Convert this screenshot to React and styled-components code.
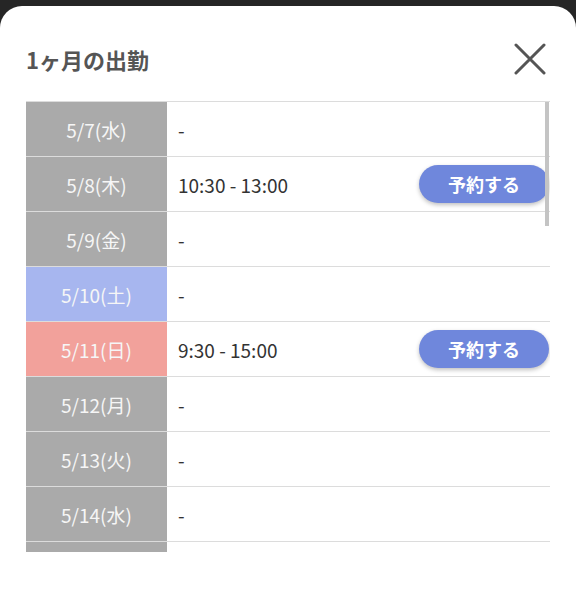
import React from 'react';
import styled, { createGlobalStyle } from 'styled-components';

const days = [
  { date: '5/7(水)', time: '-' },
  { date: '5/8(木)', time: '10:30 - 13:00', reserve: true },
  { date: '5/9(金)', time: '-' },
  { date: '5/10(土)', time: '-', kind: 'sat' },
  { date: '5/11(日)', time: '9:30 - 15:00', reserve: true, kind: 'sun' },
  { date: '5/12(月)', time: '-' },
  { date: '5/13(火)', time: '-' },
  { date: '5/14(水)', time: '-' },
  { date: '5/15(木)', time: '-' },
];

const dateColors = {
  sat: '#a7b6ef',
  sun: '#f2a19b',
  normal: '#aaaaaa',
};

const App = () => {
  return (
    <>
      <GlobalStyle />
      <Screen>
        <Sheet>
          <Header>
            <Title>1ヶ月の出勤</Title>
            <CloseButton aria-label="close">
              <svg width="32" height="32" viewBox="0 0 32 32">
                <path
                  d="M2 2 L30 30 M30 2 L2 30"
                  stroke="#555"
                  strokeWidth="3"
                  strokeLinecap="round"
                />
              </svg>
            </CloseButton>
          </Header>
          <TableWrap>
            {days.map((day) => (
              <Row key={day.date}>
                <DateCell kind={day.kind || 'normal'}>{day.date}</DateCell>
                <TimeCell>
                  <span>{day.time}</span>
                  {day.reserve && <ReserveButton>予約する</ReserveButton>}
                </TimeCell>
              </Row>
            ))}
            <ScrollThumb />
          </TableWrap>
        </Sheet>
      </Screen>
    </>
  );
};

export default App;

const GlobalStyle = createGlobalStyle`
  body {
    margin: 0;
    background: #262626;
    font-family: "Noto Sans CJK JP", "Noto Sans", sans-serif;
  }
`;

const Screen = styled.div`
  height: 590px;
  padding-top: 6px;
  box-sizing: border-box;
  display: flex;
  flex-direction: column;
`;

const Sheet = styled.div`
  flex: 1;
  background: #fff;
  border-radius: 22px 22px 0 0;
  padding: 30px 26px 0;
`;

const Header = styled.div`
  height: 46px;
  display: flex;
  align-items: center;
  justify-content: space-between;
  margin-bottom: 19px;
`;

const Title = styled.h1`
  margin: 0;
  font-size: 22px;
  font-weight: 700;
  color: #555;
`;

const CloseButton = styled.button`
  border: none;
  background: none;
  padding: 0;
  margin-right: 4px;
  display: flex;
`;

const TableWrap = styled.div`
  position: relative;
  height: 451px;
  overflow: hidden;
  border-top: 1px solid #dcdcdc;
  box-sizing: border-box;
`;

const Row = styled.div`
  display: grid;
  grid-template-columns: 141px 1fr;
  height: 55px;
  box-sizing: border-box;
  border-bottom: 1px solid #dcdcdc;
`;

const DateCell = styled.div`
  background: ${(p) => dateColors[p.kind]};
  color: #f6f6f6;
  font-size: 19px;
  display: flex;
  align-items: center;
  justify-content: center;
`;

const TimeCell = styled.div`
  display: flex;
  align-items: center;
  justify-content: space-between;
  padding-left: 11px;
  font-size: 19px;
  color: #333;
`;

const ReserveButton = styled.button`
  width: 130px;
  height: 38px;
  margin-right: 1px;
  border: none;
  border-radius: 19px;
  background: #6f87dc;
  color: #fff;
  font-family: inherit;
  font-size: 18px;
  font-weight: 700;
  box-shadow: 0 2px 4px rgba(0, 0, 0, 0.25);
`;

const ScrollThumb = styled.div`
  position: absolute;
  top: 0;
  right: 1px;
  width: 4px;
  height: 124px;
  background: #c4c4c4;
`;
